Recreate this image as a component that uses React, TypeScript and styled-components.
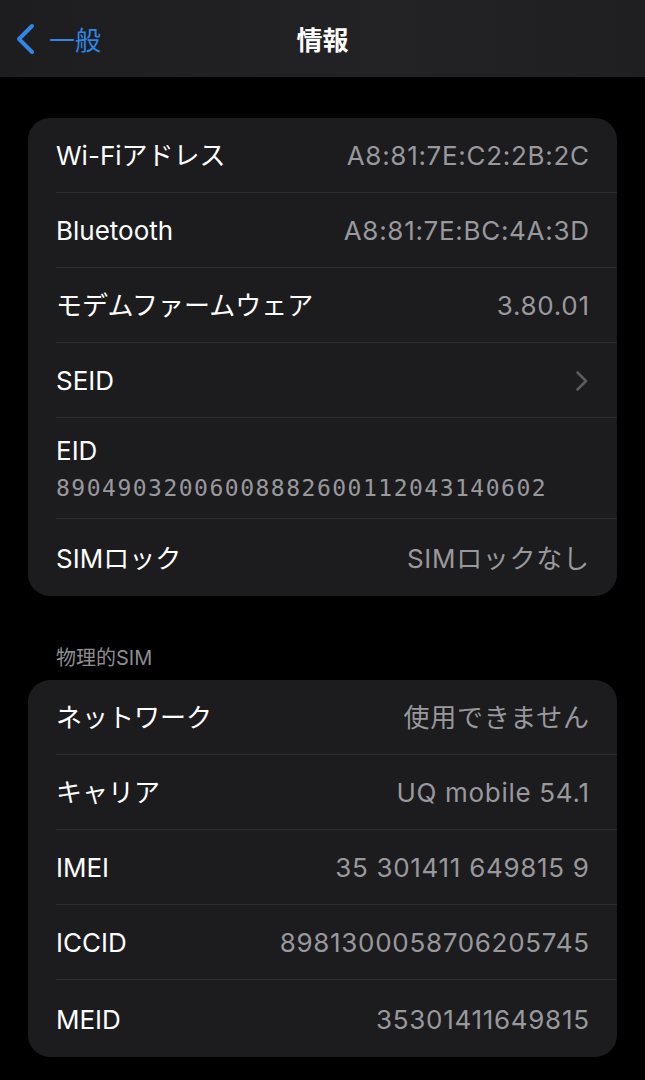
import styled, { createGlobalStyle } from "styled-components";

type InfoRow = {
  label: string;
  value?: string;
  chevron?: boolean;
  stacked?: boolean;
};

const deviceRows: InfoRow[] = [
  { label: "Wi-Fiアドレス", value: "A8:81:7E:C2:2B:2C" },
  { label: "Bluetooth", value: "A8:81:7E:BC:4A:3D" },
  { label: "モデムファームウェア", value: "3.80.01" },
  { label: "SEID", chevron: true },
  { label: "EID", value: "89049032006008882600112043140602", stacked: true },
  { label: "SIMロック", value: "SIMロックなし" },
];

const simRows: InfoRow[] = [
  { label: "ネットワーク", value: "使用できません" },
  { label: "キャリア", value: "UQ mobile 54.1" },
  { label: "IMEI", value: "35 301411 649815 9" },
  { label: "ICCID", value: "8981300058706205745" },
  { label: "MEID", value: "35301411649815" },
];

const GlobalStyle = createGlobalStyle`
  html, body {
    margin: 0;
    padding: 0;
    background: #000;
  }
  body {
    font-family: Inter, "Noto Sans CJK JP", sans-serif;
    -webkit-font-smoothing: antialiased;
  }
`;

const Page = styled.div`
  width: 645px;
  min-height: 1080px;
  background: #000;
  display: flex;
  flex-direction: column;
`;

const NavBar = styled.div`
  height: 77px;
  background: linear-gradient(90deg, #1d1d1f 0%, #232325 60%, #1f1f21 100%);
  display: grid;
  grid-template-columns: 1fr auto 1fr;
  align-items: center;
  padding: 0 14px;
  box-sizing: border-box;
`;

const BackButton = styled.div`
  display: flex;
  align-items: center;
  gap: 13px;
  color: #2f86e6;
  font-size: 26px;
  font-family: "Noto Sans CJK JP", sans-serif;
`;

const NavTitle = styled.div`
  color: #fff;
  font-size: 26px;
  font-weight: 700;
  font-family: "Noto Sans CJK JP", sans-serif;
`;

const Content = styled.div`
  padding: 41px 28px 0;
  display: flex;
  flex-direction: column;
`;

const Card = styled.div`
  background: #1c1c1e;
  border-radius: 22px;
  overflow: hidden;
`;

const Row = styled.div`
  padding-left: 28px;
`;

const RowInner = styled.div<{ $last: boolean; $stacked: boolean }>`
  box-sizing: border-box;
  height: ${({ $stacked, $last }) => ($stacked ? 101 : $last ? 77 : 75)}px;
  padding: ${({ $stacked }) => ($stacked ? "17px 28px 14px 0" : "2px 28px 0 0")};
  display: flex;
  flex-direction: ${({ $stacked }) => ($stacked ? "column" : "row")};
  align-items: ${({ $stacked }) => ($stacked ? "flex-start" : "center")};
  justify-content: ${({ $stacked }) => ($stacked ? "flex-start" : "space-between")};
  gap: ${({ $stacked }) => ($stacked ? "5px" : "0")};
  border-bottom: ${({ $last }) => ($last ? "none" : "1px solid #2e2e31")};
`;

const Label = styled.span`
  color: #fff;
  font-size: 26px;
  line-height: 32px;
`;

const Value = styled.span`
  color: #98989d;
  font-size: 26px;
  line-height: 32px;
  letter-spacing: 0.7px;
  margin-right: -0.7px;
`;

const MonoValue = styled.span`
  color: #98989d;
  font-family: "DejaVu Sans Mono", monospace;
  font-size: 23px;
  letter-spacing: 1.5px;
  line-height: 32px;
`;

const SectionHeader = styled.div`
  color: #8d8d92;
  font-size: 20px;
  line-height: 24px;
  margin: 50px 0 10px 28px;
`;

const BackChevron = () => (
  <svg width="22" height="32" viewBox="0 0 22 32">
    <path
      d="M18 3 L5 16 L18 29"
      fill="none"
      stroke="#2f86e6"
      strokeWidth="4"
      strokeLinecap="round"
      strokeLinejoin="round"
    />
  </svg>
);

const RowChevron = () => (
  <svg width="14" height="22" viewBox="0 0 14 22">
    <path
      d="M2.5 2.5 L11 11 L2.5 19.5"
      fill="none"
      stroke="#5b5b60"
      strokeWidth="2.6"
      strokeLinecap="round"
      strokeLinejoin="round"
    />
  </svg>
);

const InfoCard = ({ rows }: { rows: InfoRow[] }) => (
  <Card>
    {rows.map((row, i) => (
      <Row key={row.label}>
        <RowInner $last={i === rows.length - 1} $stacked={!!row.stacked}>
          <Label>{row.label}</Label>
          {row.stacked ? (
            <MonoValue>{row.value}</MonoValue>
          ) : row.chevron ? (
            <RowChevron />
          ) : (
            <Value>{row.value}</Value>
          )}
        </RowInner>
      </Row>
    ))}
  </Card>
);

export default function App() {
  return (
    <Page>
      <GlobalStyle />
      <NavBar>
        <BackButton>
          <BackChevron />
          <span>一般</span>
        </BackButton>
        <NavTitle>情報</NavTitle>
        <div />
      </NavBar>
      <Content>
        <InfoCard rows={deviceRows} />
        <SectionHeader>物理的SIM</SectionHeader>
        <InfoCard rows={simRows} />
      </Content>
    </Page>
  );
}
